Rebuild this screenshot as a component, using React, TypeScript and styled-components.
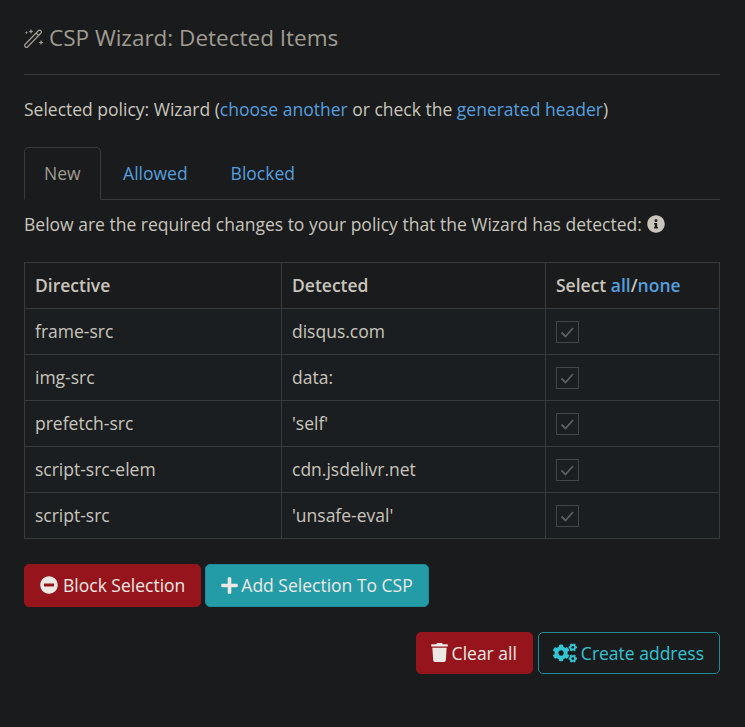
import React from 'react'
import styled, { createGlobalStyle } from 'styled-components'
import { FaCogs, FaInfoCircle, FaMinusCircle, FaPlus, FaTrash } from 'react-icons/fa'

const GlobalStyle = createGlobalStyle`
  html, body {
    margin: 0;
    background: #191b1d;
  }
  body {
    font-family: "Open Sans", "Liberation Sans", sans-serif;
    font-size: 17.5px;
    line-height: 26px;
    color: #c9c5bc;
  }
`

const Page = styled.div`
  box-sizing: border-box;
  width: 745px;
  height: 727px;
  padding: 21px 25px 0 24px;
  display: flex;
  flex-direction: column;
`

const Title = styled.h4`
  margin: 0;
  padding-bottom: 20px;
  border-bottom: 1px solid #383b3d;
  font-size: 22.5px;
  line-height: 33px;
  font-weight: 400;
  color: #a09c91;
  display: flex;
  align-items: center;
  gap: 5px;
`

const Intro = styled.p`
  margin: 21px 0 25px;
`

const Link = styled.a`
  color: #569fdf;
  text-decoration: none;
`

const TabList = styled.div`
  display: flex;
  height: 53px;
  box-sizing: border-box;
  border-bottom: 1px solid #383b3d;
`

const Tab = styled.a<{ $active?: boolean }>`
  box-sizing: border-box;
  height: 53px;
  padding: 12px ${({ $active }) => ($active ? '19px' : '20.5px')} 0;
  margin-right: ${({ $active }) => ($active ? '1px' : '0')};
  border: 1px solid ${({ $active }) => ($active ? '#383b3d' : 'transparent')};
  border-bottom-color: ${({ $active }) => ($active ? '#191b1d' : 'transparent')};
  border-radius: 5px 5px 0 0;
  color: ${({ $active }) => ($active ? '#a09c91' : '#569fdf')};
`

const Lead = styled.p`
  margin: 11px 0 25px;
  display: flex;
  align-items: center;
  gap: 5px;
`

const InfoIcon = styled(FaInfoCircle)`
  width: 18px;
  height: 18px;
  color: #c9c5bc;
`

const Table = styled.table`
  width: 695px;
  table-layout: fixed;
  border-collapse: collapse;
  margin-bottom: 25px;
  th, td {
    height: 46px;
    box-sizing: border-box;
    padding: 0 10px 2px;
    border: 1px solid #383b3d;
    text-align: left;
    vertical-align: middle;
  }
  th {
    font-weight: 600;
  }
  td {
    background: #1b1e20;
  }
`

const Check = styled.span`
  box-sizing: border-box;
  display: block;
  width: 23px;
  height: 22px;
  margin-top: 2px;
  border: 1px solid #43474a;
  color: #5c6064;
  svg {
    display: block;
    margin: 3px 0 0 3px;
  }
`

const ButtonRow = styled.div<{ $end?: boolean }>`
  display: flex;
  gap: ${({ $end }) => ($end ? '5px' : '4px')};
  justify-content: ${({ $end }) => ($end ? 'flex-end' : 'flex-start')};
  margin-bottom: 25px;
`

const Button = styled.a<{
  $tone: 'danger' | 'info' | 'outline'
  $height: number
  $compact?: boolean
  $gap?: number
}>`
  box-sizing: border-box;
  height: ${({ $height }) => $height}px;
  padding: 0 15px 1px ${({ $compact }) => ($compact ? '14px' : '15px')};
  border-radius: 5px;
  display: inline-flex;
  align-items: center;
  gap: ${({ $gap }) => $gap ?? 4}px;
  background: ${({ $tone }) =>
    $tone === 'danger' ? '#96151c' : $tone === 'info' ? '#249ca8' : 'transparent'};
  border: 1px solid ${({ $tone }) => ($tone === 'danger' ? '#96151c' : '#1d8c98')};
  color: ${({ $tone }) => ($tone === 'outline' ? '#33c5d4' : '#ece9e4')};
`

const PlusIcon = styled(FaPlus)`
  width: 17px;
  height: 19px;
`

const TrashIcon = styled(FaTrash)`
  width: 17px;
  height: 19px;
`

const rows = [
  ['frame-src', 'disqus.com'],
  ['img-src', 'data:'],
  ['prefetch-src', "'self'"],
  ['script-src-elem', 'cdn.jsdelivr.net'],
  ['script-src', "'unsafe-eval'"],
]

function WandIcon() {
  return (
    <svg width="20" height="21" viewBox="0 0 20 21" fill="none" stroke="currentColor" strokeWidth="1.2">
      <path d="M1 17.5 14.5 3.5a1.4 1.4 0 0 1 2 0l.5.5a1.4 1.4 0 0 1 0 2L3.5 20a1.4 1.4 0 0 1-2 0l-.5-.5a1.4 1.4 0 0 1 0-2Z" />
      <path d="M12 6l3 3" />
      <path
        fill="currentColor"
        stroke="none"
        d="M7 2l.8 1.7 1.7.8-1.7.8L7 7l-.8-1.7-1.7-.8 1.7-.8ZM2.5 4l.5 1 1 .5-1 .5-.5 1-.5-1-1-.5 1-.5ZM17 13l.8 1.7 1.7.8-1.7.8L17 18l-.8-1.7-1.7-.8 1.7-.8Z"
      />
    </svg>
  )
}

function App() {
  return (
    <Page>
      <GlobalStyle />
      <Title>
        <WandIcon />
        CSP Wizard: Detected Items
      </Title>
      <Intro>
        Selected policy: Wizard (<Link>choose another</Link> or check the{' '}
        <Link>generated header</Link>)
      </Intro>
      <TabList>
        <Tab $active>New</Tab>
        <Tab>Allowed</Tab>
        <Tab>Blocked</Tab>
      </TabList>
      <Lead>
        Below are the required changes to your policy that the Wizard has detected:
        <InfoIcon />
      </Lead>
      <Table>
        <colgroup>
          <col style={{ width: 257 }} />
          <col style={{ width: 264 }} />
          <col style={{ width: 174 }} />
        </colgroup>
        <thead>
          <tr>
            <th>Directive</th>
            <th>Detected</th>
            <th>
              Select <Link>all</Link>/<Link>none</Link>
            </th>
          </tr>
        </thead>
        <tbody>
          {rows.map(([directive, detected]) => (
            <tr key={directive}>
              <td>{directive}</td>
              <td>{detected}</td>
              <td>
                <Check>
                  <svg width="15" height="14" viewBox="0 0 15 14" fill="none">
                    <path d="M1.5 7.5 5.5 11.5 13 3" stroke="currentColor" strokeWidth="1.8" />
                  </svg>
                </Check>
              </td>
            </tr>
          ))}
        </tbody>
      </Table>
      <ButtonRow>
        <Button $tone="danger" $height={43} $gap={5}>
          <FaMinusCircle size={18} />
          Block Selection
        </Button>
        <Button $tone="info" $height={43} $gap={3}>
          <PlusIcon />
          Add Selection To CSP
        </Button>
      </ButtonRow>
      <ButtonRow $end>
        <Button $tone="danger" $height={42} $compact>
          <TrashIcon />
          Clear all
        </Button>
        <Button $tone="outline" $height={42} $compact>
          <FaCogs size={24} />
          Create address
        </Button>
      </ButtonRow>
    </Page>
  )
}

export default App
